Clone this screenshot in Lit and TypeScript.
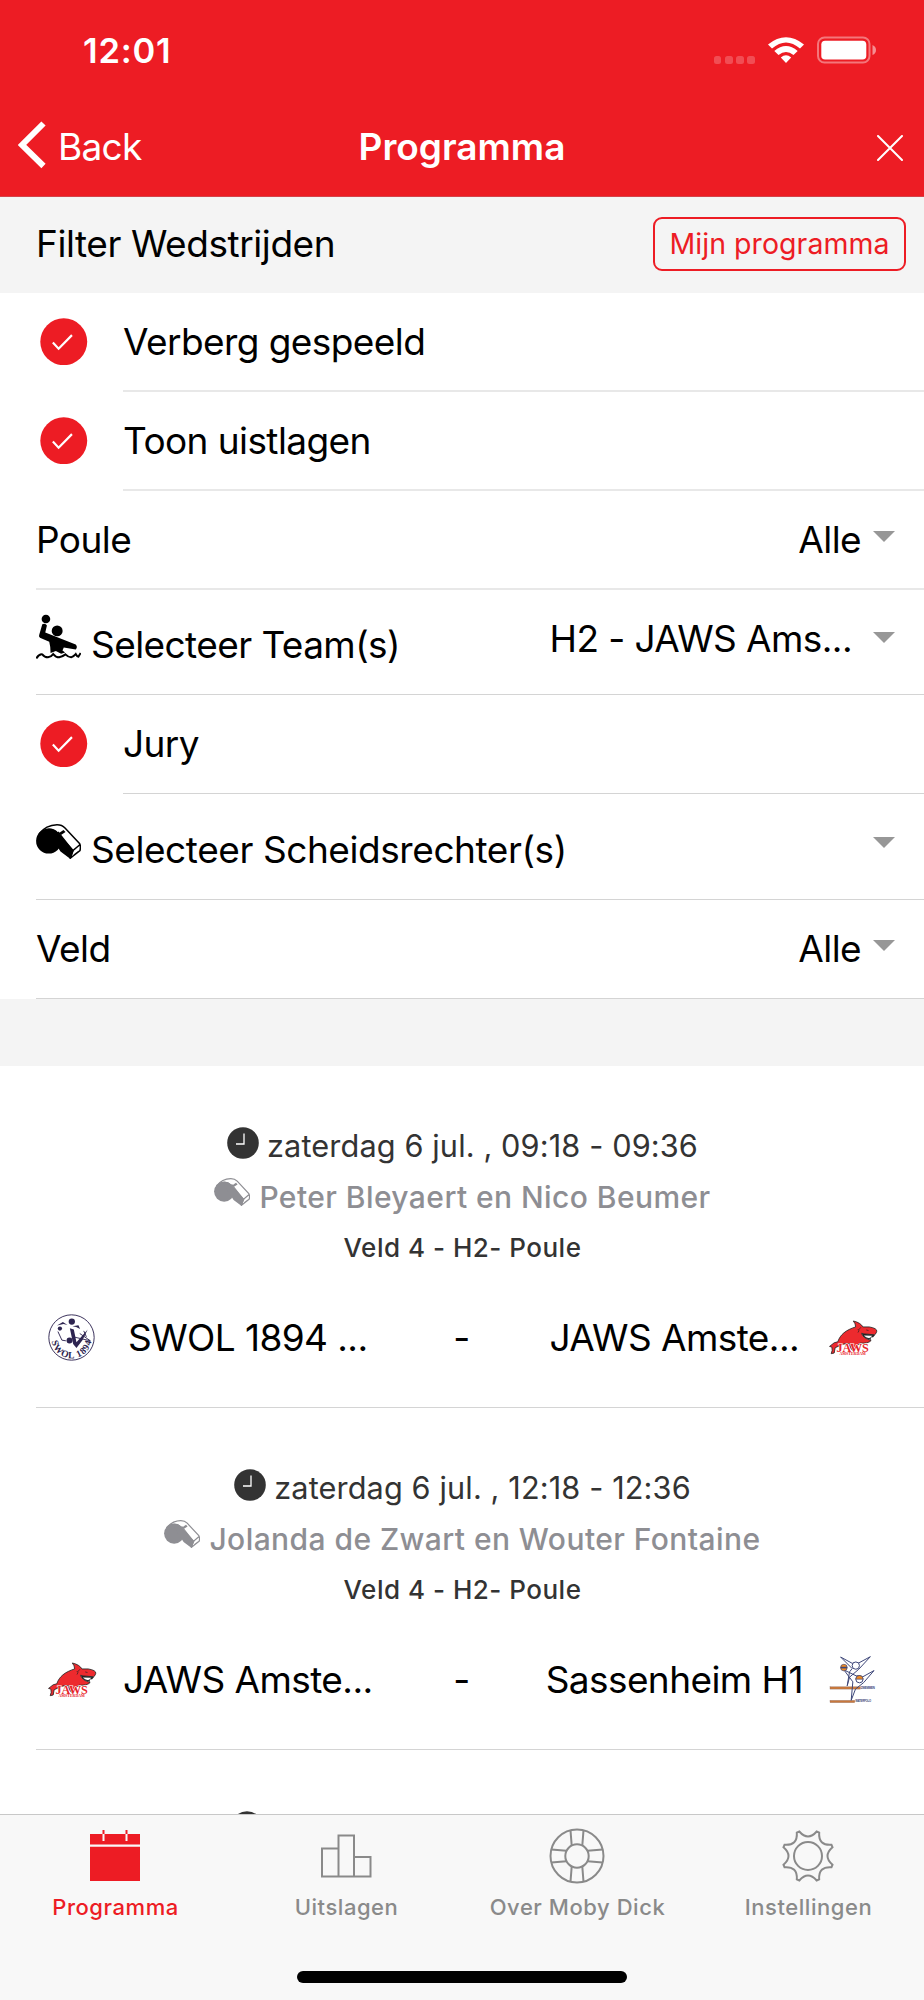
import { LitElement, html, svg, css } from 'lit';
import { customElement } from 'lit/decorators.js';

const caret = html`<svg class="caret" viewBox="0 0 22 11"><path d="M0 0H22L11 11Z" /></svg>`;

const check = html`
    <svg class="check" viewBox="0 0 48 48">
        <circle cx="24" cy="24" r="23.7" />
        <path d="M13 24.8L18.8 31L32.3 17.3" />
    </svg>
`;

const player = html`
    <svg class="player" viewBox="108 942 136 136">
        <circle cx="138" cy="957" r="13" />
        <circle cx="172" cy="993" r="16.5" />
        <path d="M127 973Q137 969 141 977L136 998L228 1034Q235 1042 228 1049L192 1043L188 1052L196 1058L184 1062L168 1054L152 1060Q152 1040 148 1026L120 1014Q115 1010 118 1004Z" />
        <path class="wave" d="M109 1076Q118 1062 127 1064Q134 1073 144 1073Q154 1071 160 1063Q168 1073 178 1073Q188 1071 197 1064Q206 1073 214 1073Q222 1070 228 1063Q232 1071 236 1071L243 1060" />
    </svg>
`;

const whistle = html`
    <svg class="whistle" viewBox="0 0 45 35">
        <circle cx="12.7" cy="17" r="12.6" />
        <path d="M10 5Q18 3 23 10L38 26.500L34.500 35L24.500 27.500Z" />
        <path class="line" d="M3 10Q10 1 21 .8Q26 .8 29 4L43.500 19.500Q45 22 44 26.500L34.500 34L36.500 27L43.500 21M22 8L37 27M38 31L42.500 27.500" />
        <path d="M23 9L27.500 6L29.500 8L25 11Z" />
    </svg>
`;

const clock = html`
    <svg class="clock" viewBox="0 0 32 32">
        <circle cx="16" cy="16" r="15.8" />
        <path d="M17 6.500V17H9" />
    </svg>
`;

const jaws = html`
    <svg class="jaws" viewBox="1098 88 150 106">
        <path class="skin" d="M1102 168L1116 157L1127 154C1134 132 1152 118 1181 109Q1181 99 1174 91Q1196 96 1203 109L1222 109Q1246 113 1245 122Q1243 131 1238 133L1218 131Q1206 131 1199 128Q1202 143 1228 150Q1219 160 1194 158L1172 180Q1162 173 1163 160Q1144 158 1132 166L1119 172L1116 188L1107 190Q1112 180 1109 170Z" />
        <path class="mouth" d="M1200 130L1240 133L1234 140L1226 141L1228 148Q1205 145 1200 130Z" />
        <path class="teeth" d="M1206 135L1232 136L1222 143Q1211 142 1206 135Z" />
        <path class="ink" d="M1188 116Q1194 120 1188 126M1213 118L1220 120M1197 110L1190 118" />
        <text class="name" x="1172" y="184" textLength="98" lengthAdjust="spacingAndGlyphs">JAWS</text>
        <text class="town" x="1172" y="193" textLength="80" lengthAdjust="spacingAndGlyphs">AMSTERDAM</text>
    </svg>
`;

const swol = html`
    <svg class="swol" viewBox="0 0 142 140">
        <defs><path id="rim" d="M10 72A61 61 0 0 0 132 72" /></defs>
        <circle class="ring" cx="71" cy="70" r="68.500" />
        <circle cx="72" cy="22" r="9.500" />
        <circle cx="36" cy="43" r="6.500" />
        <circle cx="65" cy="79" r="9" />
        <path d="M27 34L45 23L59 32L47 29ZM74 36L92 33L97 44L85 38ZM66 42L78 46L86 84L120 46L104 78L86 102L76 90Z" />
        <path class="limb" d="M30 52L42 78L54 80M96 58L128 80L76 68M108 50L116 68" />
        <text><textPath href="#rim" startOffset="5%" textLength="172">SWOL 1894</textPath></text>
    </svg>
`;

const sassenheim = html`
    <svg class="sassenheim" viewBox="0 0 142 146">
        <rect class="beam" x="3" y="95" width="92" height="7" />
        <rect class="beam" x="3" y="136" width="75" height="7" />
        <path d="M35 5L70 24Q82 22 88 24L125 4L90 42L62 66L55 92L62 50L70 40ZM45 44L82 62Q94 60 100 66L136 46L105 82L80 102L67 136L72 80Z" />
        <circle class="white" cx="81" cy="31" r="11" />
        <circle class="white" cx="92" cy="72" r="11" />
        <path class="orange" d="M81 72A11 11 0 0 1 103 72Z" />
        <circle class="ball" cx="45" cy="37" r="10" />
        <path class="stripe" d="M35 37H55" />
        <text x="96" y="101" textLength="42" lengthAdjust="spacingAndGlyphs">ZWEMMEN</text>
        <text x="79" y="142" textLength="48" lengthAdjust="spacingAndGlyphs">WATERPOLO</text>
    </svg>
`;

// Cog outline: eight cusps joined by concave curves
const cogPath = () => {
    const point = (deg: number, r: number) => {
        const a = (deg * Math.PI) / 180;
        return `${(28 + r * Math.cos(a)).toFixed(2)} ${(28 + r * Math.sin(a)).toFixed(2)}`;
    };
    let d = `M${point(-19.5, 26)}`;
    for (let i = 0; i < 8; i++) {
        const mid = i * 45;
        d += `Q${point(mid, 14.5)} ${point(mid + 19.5, 26)}L${point(mid + 25.5, 26)}`;
    }
    return d + 'Z';
};

const spokes = [0, 90, 180, 270].map(
    (deg) => svg`<path d="M21.500 2.300L22.700 17.500M34.500 2.300L33.300 17.500" transform="rotate(${deg} 28 28)" />`
);

const tabs = [
    {
        label: 'Programma',
        active: true,
        icon: svg`<path class="solid" d="M3 6H53V16.500H3ZM3 18.800H53V53H3Z" /><path class="gap" d="M16.500 6V13M39.500 6V13" /><path class="pin" d="M16.500 2V6M39.500 2V6" />`,
    },
    {
        label: 'Uitslagen',
        active: false,
        icon: svg`<path d="M4 20.500H20.500V48.500H4ZM20.500 7.500H36V48.500H20.500ZM36 29H52.500V48.500H36Z" />`,
    },
    {
        label: 'Over Moby Dick',
        active: false,
        icon: svg`<circle cx="28" cy="28" r="26.500" /><circle cx="28" cy="28" r="11.700" />${spokes}`,
    },
    {
        label: 'Instellingen',
        active: false,
        icon: svg`<path d=${cogPath()} /><circle cx="28" cy="28" r="14" />`,
    },
];

const matches = [
    {
        time: 'zaterdag 6 jul. , 09:18 - 09:36',
        referees: 'Peter Bleyaert en Nico Beumer',
        field: 'Veld 4 - H2- Poule',
        home: 'SWOL 1894 ...',
        away: 'JAWS Amste...',
        homeLogo: swol,
        awayLogo: jaws,
    },
    {
        time: 'zaterdag 6 jul. , 12:18 - 12:36',
        referees: 'Jolanda de Zwart en Wouter Fontaine',
        field: 'Veld 4 - H2- Poule',
        home: 'JAWS Amste...',
        away: 'Sassenheim H1',
        homeLogo: jaws,
        awayLogo: sassenheim,
    },
];

@customElement('app-root')
export class AppRoot extends LitElement {
    private _renderCheckRow(label: string) {
        return html`
            <div class="row">
                <div class="slot">${check}</div>
                <div class="inner"><span>${label}</span></div>
            </div>
        `;
    }

    private _renderMatch(match) {
        return html`
            <div class="match">
                <div class="time">${clock}<span>${match.time}</span></div>
                <div class="referees">${whistle}<span>${match.referees}</span></div>
                <div class="field">${match.field}</div>
                <div class="teams">
                    <div class="logo">${match.homeLogo}</div>
                    <div class="team">${match.home}</div>
                    <div>-</div>
                    <div class="team away">${match.away}</div>
                    <div class="logo">${match.awayLogo}</div>
                </div>
            </div>
        `;
    }

    render() {
        return html`
            <header>
                <div class="status">
                    <span class="now">12:01</span>
                    <div class="signal"><i></i><i></i><i></i><i></i></div>
                    <svg class="wifi" viewBox="0 0 36 26">
                        <path d="M0 7.500Q18 -7 36 7.500L32 11.500Q18 -.5 4 11.500ZM6.300 14Q18 4 29.700 14L25.500 18Q18 12 10.500 18ZM12.800 20.500Q18 16 23.200 20.500L18 26Z" />
                    </svg>
                    <svg class="battery" viewBox="0 0 60 28">
                        <rect class="shell" x="1" y="1.500" width="51.500" height="25" rx="6.500" />
                        <rect x="4.300" y="4.800" width="45" height="18.700" rx="3.800" />
                        <path class="nub" d="M55.500 9Q59 10.500 59 14T55.500 19Z" />
                    </svg>
                </div>
                <nav>
                    <div class="back">
                        <svg viewBox="0 0 28 48"><path d="M25.500 2.500L4 24L25.500 45" /></svg>
                        <span>Back</span>
                    </div>
                    <h1>Programma</h1>
                    <svg class="close" viewBox="0 0 26 26"><path d="M1 1L25 25M25 1L1 25" /></svg>
                </nav>
            </header>

            <section class="heading">
                <span>Filter Wedstrijden</span>
                <button>Mijn programma</button>
            </section>

            <section class="filters">
                ${this._renderCheckRow('Verberg gespeeld')}
                ${this._renderCheckRow('Toon uistlagen')}
                <div class="row">
                    <div class="inner"><span>Poule</span><span class="value">Alle</span>${caret}</div>
                </div>
                <div class="row tall thin">
                    <div class="inner">${player}<span class="label">Selecteer Team(s)</span><span class="value wide">H2 - JAWS Ams...</span>${caret}</div>
                </div>
                <div class="thin">${this._renderCheckRow('Jury')}</div>
                <div class="row tall last thin">
                    <div class="inner">${whistle}<span class="label loose">Selecteer Scheidsrechter(s)</span><span class="value"></span>${caret}</div>
                </div>
                <div class="row thin">
                    <div class="inner"><span>Veld</span><span class="value">Alle</span>${caret}</div>
                </div>
            </section>

            <div class="divider"></div>

            <main>
                ${matches.map((match) => this._renderMatch(match))}
                <div class="match">
                    <div class="time">${clock}<span class="pending"></span></div>
                </div>
            </main>

            <footer>
                <div class="tabs">
                    ${tabs.map(
                        (tab) => html`
                            <div class="tab ${tab.active ? 'active' : ''}">
                                <svg viewBox="0 0 56 56">${tab.icon}</svg>
                                <span>${tab.label}</span>
                            </div>
                        `
                    )}
                </div>
                <div class="home"></div>
            </footer>
        `;
    }

    static get styles() {
        return css`
            :host {
                display: flex;
                flex-direction: column;
                height: 2000px;
                overflow: hidden;
                background: #fff;
                color: #000;
                font-family: Inter, sans-serif;
                font-size: 37px;
                letter-spacing: -0.58px;
                line-height: 48px;
                white-space: nowrap;
            }

            * {
                box-sizing: border-box;
            }

            svg {
                display: block;
                flex: none;
            }

            header {
                flex: none;
                height: 197px;
                background: #ed1c24;
                border-bottom: 1px solid #d4434a;
                color: #fff;
            }

            .status {
                display: flex;
                height: 98px;
                padding: 0 47px 0 83px;
            }

            .now {
                flex: 1;
                padding-top: 27px;
                font-size: 34.5px;
                font-weight: 600;
                letter-spacing: 0.8px;
            }

            .signal {
                display: flex;
                gap: 3.6px;
                margin: 56px 13px 0 0;
            }

            .signal i {
                width: 7.6px;
                height: 7.6px;
                border-radius: 2.5px;
                background: rgba(255, 255, 255, 0.22);
            }

            .wifi {
                width: 36px;
                height: 26px;
                margin: 37px 13px 0 0;
                fill: #fff;
            }

            .battery {
                width: 60px;
                height: 28px;
                margin-top: 36px;
                fill: #fff;
            }

            .battery .shell {
                fill: none;
                stroke: #fff;
                stroke-opacity: 0.4;
                stroke-width: 2;
            }

            .battery .nub {
                fill-opacity: 0.5;
            }

            nav {
                display: grid;
                grid-template-columns: 1fr auto 1fr;
                align-items: center;
                height: 98px;
                padding: 0 18px;
                letter-spacing: 0;
            }

            .back {
                display: flex;
                align-items: center;
                gap: 12px;
                letter-spacing: -0.7px;
            }

            .back svg {
                width: 28px;
                height: 48px;
                margin-bottom: 4px;
                fill: none;
                stroke: #fff;
                stroke-width: 6;
            }

            h1 {
                margin: 0;
                font-size: 37px;
                font-weight: 600;
            }

            .close {
                justify-self: end;
                width: 26px;
                height: 26px;
                margin: 2px 3px 0 0;
                stroke: #fff;
                stroke-width: 2;
                stroke-linecap: round;
            }

            .heading {
                display: flex;
                flex: none;
                align-items: center;
                justify-content: space-between;
                height: 96px;
                padding: 0 18px 3px 36px;
                background: #f4f4f4;
                letter-spacing: -0.43px;
            }

            button {
                width: 253px;
                height: 54px;
                padding: 0;
                border: 2px solid #ed1c24;
                border-radius: 9px;
                background: none;
                color: #ed1c24;
                font: 28.5px Inter, sans-serif;
                letter-spacing: 0.05px;
            }

            .filters {
                flex: none;
            }

            .row {
                display: flex;
                height: 99px;
                padding-left: 36px;
            }

            .tall {
                height: 105px;
            }

            .tall.last {
                height: 106px;
            }

            .slot {
                display: flex;
                align-items: center;
                width: 87px;
                padding: 0 0 2px 4px;
            }

            .inner {
                display: flex;
                flex: 1;
                align-items: center;
                padding-right: 29px;
                border-bottom: 2px solid #e8e8e8;
            }

            .thin .inner {
                border-bottom: 1px solid #d4d4d4;
            }

            .check {
                width: 47.5px;
                height: 47.5px;
                fill: #ed1c24;
            }

            .check path {
                fill: none;
                stroke: #fff;
                stroke-width: 2.2;
            }

            .value {
                flex: 1;
                padding-right: 12px;
                text-align: right;
            }

            .value.wide {
                padding: 0 21px 7px 0;
            }

            .caret {
                width: 22px;
                height: 11px;
                margin-bottom: 7px;
                fill: #979797;
            }

            .tall .caret {
                margin-bottom: 9px;
            }

            .player {
                width: 45px;
                height: 45px;
                margin-bottom: 11px;
            }

            .player .wave {
                fill: none;
                stroke: #000;
                stroke-width: 6;
            }

            .whistle {
                width: 45px;
                height: 35px;
                margin-bottom: 11px;
            }

            .whistle .line {
                fill: none;
                stroke: currentColor;
                stroke-width: 1.5;
            }

            .label {
                margin-left: 10px;
                padding-top: 6px;
            }

            .label.loose {
                letter-spacing: -0.43px;
            }

            .divider {
                flex: none;
                height: 67px;
                background: #f4f4f4;
            }

            main {
                flex: 1;
                min-height: 0;
                overflow: hidden;
            }

            .match {
                height: 342px;
                margin-left: 36px;
                padding: 54px 35px 0 0;
                border-bottom: 1px solid #d4d4d4;
                color: #333;
            }

            .time,
            .referees,
            .field {
                display: flex;
                align-items: center;
                justify-content: center;
                height: 51px;
            }

            .time {
                gap: 8px;
                font-size: 30.7px;
                letter-spacing: 0.12px;
            }

            .pending {
                width: 423px;
            }

            .clock {
                width: 32px;
                height: 32px;
                margin-bottom: 6px;
                fill: #333;
            }

            .clock path {
                fill: none;
                stroke: #fff;
                stroke-width: 1.3;
            }

            .referees {
                gap: 9px;
                color: #8e8e93;
                font-size: 30px;
                font-weight: 500;
                letter-spacing: 0.43px;
            }

            .referees .whistle {
                width: 36px;
                height: 28px;
                margin-bottom: 10px;
                fill: #8e8e93;
            }

            .field {
                font-size: 26px;
                font-weight: 500;
                letter-spacing: 0.5px;
            }

            .teams {
                display: grid;
                grid-template-columns: 71px 1fr 146px 1fr 73px;
                align-items: center;
                height: 50px;
                margin-top: 40px;
                color: #000;
                text-align: center;
            }

            .away {
                padding-right: 2px;
            }

            .logo {
                display: flex;
                justify-content: center;
                padding-bottom: 1px;
            }

            .jaws {
                width: 50px;
                height: 35px;
            }

            .jaws .skin {
                fill: #ed2a2e;
                stroke: #222;
                stroke-width: 2.5;
            }

            .jaws .mouth {
                fill: #222;
            }

            .jaws .teeth {
                fill: #fff;
            }

            .jaws .ink {
                fill: none;
                stroke: #222;
                stroke-width: 2;
            }

            .jaws text {
                fill: #e8242a;
                font-family: 'Liberation Serif', serif;
                font-weight: 700;
                letter-spacing: 0;
                text-anchor: middle;
            }

            .jaws .name {
                font-size: 36px;
                stroke: #fff;
                stroke-width: 3;
                paint-order: stroke;
            }

            .jaws .town {
                font-size: 12px;
            }

            .swol {
                width: 47px;
                height: 47px;
                fill: #2d2450;
            }

            .swol .ring,
            .swol .limb {
                fill: none;
                stroke: #2d2450;
                stroke-width: 2.8;
            }

            .swol text {
                font: 700 29px 'Liberation Serif', serif;
                letter-spacing: 0;
            }

            .sassenheim {
                width: 47px;
                height: 49px;
                fill: none;
                stroke: #3c4678;
                stroke-width: 3;
            }

            .sassenheim .beam {
                fill: #c8783c;
                stroke: #8a6a60;
                stroke-width: 1;
            }

            .sassenheim .white {
                fill: #fff;
            }

            .sassenheim .orange,
            .sassenheim .ball {
                fill: #f08a20;
                stroke-width: 2;
            }

            .sassenheim .stripe {
                stroke-width: 5;
            }

            .sassenheim text {
                fill: #3c4678;
                stroke: none;
                font: 700 9px 'Liberation Sans', sans-serif;
            }

            footer {
                flex: none;
                height: 186px;
                border-top: 1px solid #c8c8c8;
                background: #f8f8f8;
            }

            .tabs {
                display: grid;
                grid-template-columns: repeat(4, 1fr);
                height: 156px;
                padding-top: 13px;
            }

            .tab {
                display: flex;
                flex-direction: column;
                align-items: center;
                color: #8a8a8a;
                font-size: 22px;
                font-weight: 500;
                letter-spacing: 0.55px;
                line-height: 30px;
            }

            .tab.active {
                color: #ed1c24;
            }

            .tab svg {
                width: 56px;
                height: 56px;
                margin: 0 2px 8px 0;
                fill: none;
                stroke: currentColor;
                stroke-width: 2;
            }

            .tab .solid {
                fill: #ed1c24;
                stroke: none;
            }

            .tab .gap {
                stroke: #f8f8f8;
            }

            .home {
                width: 330px;
                height: 12px;
                margin: 0 auto;
                border-radius: 6px;
                background: #000;
            }
        `;
    }
}
